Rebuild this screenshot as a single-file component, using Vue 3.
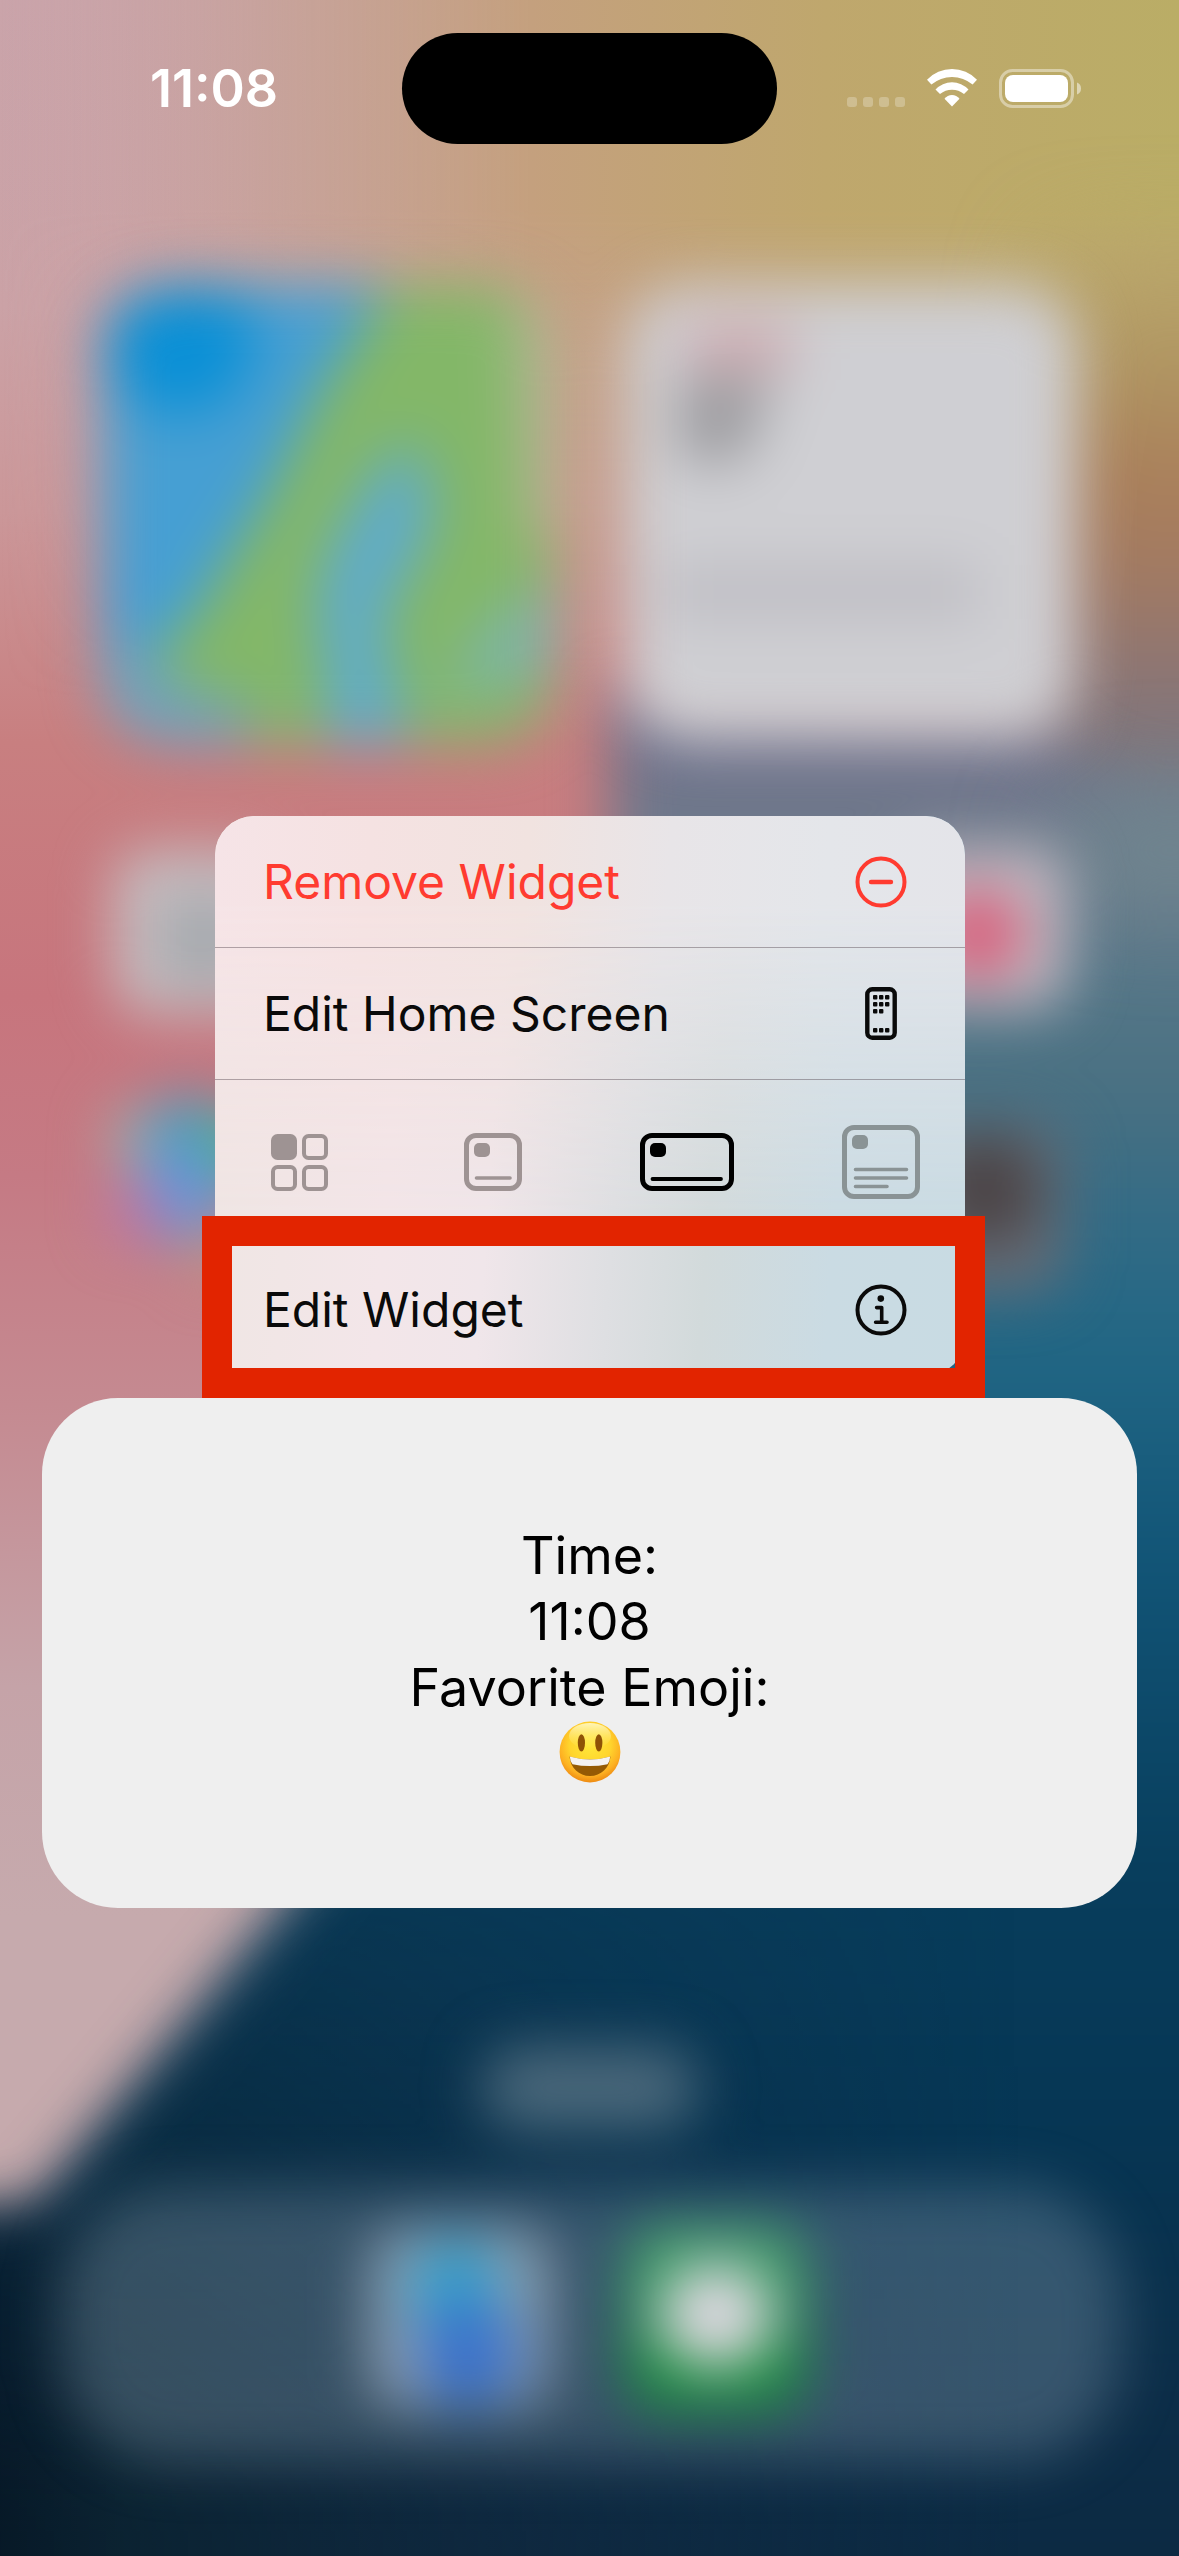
<script setup>
const sizes = [
  { id: 'icon', label: 'App icon', w: 57, h: 57 },
  { id: 'small', label: 'Small widget', w: 58, h: 58 },
  { id: 'medium', label: 'Medium widget', w: 94, h: 58 },
  { id: 'large', label: 'Large widget', w: 78, h: 74 },
]
const current = 'medium'
const phoneDots = [
  [8, 8], [14, 8], [20, 8],
  [8, 15], [14, 15], [20, 15],
  [8, 22], [14, 22],
  [8, 41], [14, 41], [20, 41],
]
</script>

<template>
  <main class="screen">
    <svg class="wallpaper" viewBox="0 0 1179 2556" preserveAspectRatio="none" aria-hidden="true">
      <defs>
        <filter id="soft" filterUnits="userSpaceOnUse" x="-300" y="-300" width="1779" height="3156" color-interpolation-filters="sRGB">
          <feGaussianBlur stdDeviation="28" />
        </filter>
        <filter id="softer" filterUnits="userSpaceOnUse" x="-300" y="-300" width="1779" height="3156" color-interpolation-filters="sRGB">
          <feGaussianBlur stdDeviation="48" />
        </filter>
        <linearGradient id="pink" gradientUnits="userSpaceOnUse" x1="0" y1="0" x2="0" y2="2556">
          <stop offset="0" stop-color="#caa4aa" />
          <stop offset="0.12" stop-color="#cba2a6" />
          <stop offset="0.2" stop-color="#cb9799" />
          <stop offset="0.29" stop-color="#c87f80" />
          <stop offset="0.39" stop-color="#c7757d" />
          <stop offset="0.46" stop-color="#c57a84" />
          <stop offset="0.55" stop-color="#c58a91" />
          <stop offset="0.66" stop-color="#c5a3a8" />
          <stop offset="0.75" stop-color="#c6aaad" />
          <stop offset="1" stop-color="#c6aaad" />
        </linearGradient>
        <linearGradient id="gold">
          <stop offset="0" stop-color="#caa4aa" stop-opacity="0" />
          <stop offset="0.25" stop-color="#c6a295" stop-opacity="0.8" />
          <stop offset="0.45" stop-color="#c4a07e" />
          <stop offset="0.7" stop-color="#bfa76d" />
          <stop offset="1" stop-color="#baad66" />
        </linearGradient>
        <linearGradient id="fade" x1="0" y1="0" x2="0" y2="1">
          <stop offset="0" stop-color="#fff" />
          <stop offset="0.3" stop-color="#fff" />
          <stop offset="1" stop-color="#000" />
        </linearGradient>
        <mask id="goldMask" maskUnits="userSpaceOnUse" x="0" y="0" width="1179" height="700">
          <rect width="1179" height="700" fill="url(#fade)" />
        </mask>
        <linearGradient id="edge" gradientUnits="userSpaceOnUse" x1="0" y1="240" x2="0" y2="900">
          <stop offset="0" stop-color="#bca869" />
          <stop offset="0.18" stop-color="#b09864" />
          <stop offset="0.36" stop-color="#aa7e59" />
          <stop offset="0.52" stop-color="#a27a63" />
          <stop offset="0.66" stop-color="#8a7475" />
          <stop offset="0.85" stop-color="#7a7882" />
          <stop offset="1" stop-color="#70848e" />
        </linearGradient>
        <linearGradient id="sea" gradientUnits="userSpaceOnUse" x1="0" y1="740" x2="0" y2="2556">
          <stop offset="0" stop-color="#70718a" />
          <stop offset="0.05" stop-color="#6f7a8c" />
          <stop offset="0.13" stop-color="#567788" />
          <stop offset="0.2" stop-color="#487082" />
          <stop offset="0.27" stop-color="#316b86" />
          <stop offset="0.34" stop-color="#216684" />
          <stop offset="0.45" stop-color="#125577" />
          <stop offset="0.62" stop-color="#083e5d" />
          <stop offset="0.76" stop-color="#063654" />
          <stop offset="0.9" stop-color="#0c2e49" />
          <stop offset="1" stop-color="#0c2a43" />
        </linearGradient>
        <linearGradient id="night">
          <stop offset="0" stop-color="#04101e" />
          <stop offset="0.16" stop-color="#0b2230" stop-opacity="0.9" />
          <stop offset="0.45" stop-color="#11273c" stop-opacity="0.5" />
          <stop offset="0.8" stop-color="#0f2c42" stop-opacity="0" />
        </linearGradient>
        <linearGradient id="nightFade" gradientUnits="userSpaceOnUse" x1="0" y1="1900" x2="0" y2="2500">
          <stop offset="0" stop-color="#555" />
          <stop offset="0.55" stop-color="#aaa" />
          <stop offset="1" stop-color="#fff" />
        </linearGradient>
        <mask id="nightMask" maskUnits="userSpaceOnUse" x="-100" y="1800" width="1400" height="900">
          <path d="M-200 2240 L60 2210 C160 2070 240 1990 340 1870 H1300 V2800 H-200 Z" fill="url(#nightFade)" filter="url(#soft)" />
        </mask>
        <linearGradient id="messages" x1="0" y1="0" x2="0" y2="1">
          <stop offset="0" stop-color="#4aa571" />
          <stop offset="1" stop-color="#128a34" />
        </linearGradient>
        <clipPath id="mapClip"><rect x="103" y="286" width="450" height="456" rx="66" /></clipPath>
      </defs>

      <rect width="1179" height="2556" fill="url(#pink)" />
      <rect width="1179" height="700" fill="url(#gold)" mask="url(#goldMask)" />
      <path d="M1060 250 H1400 V1000 H1000 V620 Z" fill="url(#edge)" filter="url(#softer)" />
      <path d="M610 690 L1020 710 C1090 780 1120 810 1400 790 V2800 H-200 V2212 H30 C160 2060 220 1985 320 1860 C470 1690 640 1400 610 1000 Z" fill="url(#sea)" filter="url(#soft)" />
      <ellipse cx="1170" cy="850" rx="120" ry="60" fill="#70868f" filter="url(#softer)" />
      <rect x="-100" y="1800" width="1400" height="900" fill="url(#night)" mask="url(#nightMask)" />

      <g filter="url(#soft)">
        <g clip-path="url(#mapClip)">
          <rect x="100" y="280" width="460" height="470" fill="#469fd3" />
          <circle cx="180" cy="340" r="74" fill="#0a90d6" />
          <path d="M400 270 H560 V760 H120 V680 L190 620 L265 500 L320 390 Z" fill="#83b768" />
          <path d="M510 270 H560 V540 H525 Z" fill="#b0b795" />
          <path d="M405 440 C450 490 435 540 390 600 C375 640 400 670 410 760 H315 C350 690 300 640 325 560 C345 520 365 480 405 440 Z" fill="#5fabcb" />
          <path d="M480 630 L560 570 V670 L440 700 Z" fill="#7cb5a6" />
          <path d="M90 640 L150 650 L180 690 L250 705 V760 H90 Z" fill="#6ba2c0" />
        </g>
        <rect x="626" y="286" width="450" height="454" rx="62" fill="#cfcfd3" />
        <rect x="686" y="330" width="106" height="34" fill="#cf9fa5" />
        <path d="M678 376 H776 L742 462 H680 Z" fill="#9b9a9e" />
        <rect x="664" y="564" width="316" height="56" fill="#bfbec4" />
        <rect x="114" y="850" width="166" height="164" rx="34" fill="#c6bfc2" />
        <rect x="160" y="896" width="90" height="90" fill="#a5a9ae" />
        <rect x="900" y="846" width="168" height="162" rx="34" fill="#c2bac2" />
        <circle cx="978" cy="934" r="46" fill="#d85f7b" />
        <circle cx="142" cy="1140" r="34" fill="#a6adaa" />
        <circle cx="190" cy="1142" r="46" fill="#4a9cbf" />
        <circle cx="236" cy="1150" r="34" fill="#48b78e" />
        <circle cx="184" cy="1196" r="46" fill="#6494dc" />
        <circle cx="136" cy="1210" r="30" fill="#b878ac" />
        <circle cx="216" cy="1250" r="26" fill="#bd9880" />
        <rect x="894" y="1122" width="170" height="170" rx="36" fill="#686d77" />
        <circle cx="985" cy="1190" r="56" fill="#4b4446" />
        <rect x="482" y="2046" width="216" height="84" rx="38" fill="#4a687b" />
        <rect x="60" y="2186" width="1060" height="276" rx="110" fill="#8ba1b4" fill-opacity="0.34" />
        <rect x="370" y="2228" width="180" height="180" rx="36" fill="#8fa0b2" />
        <circle cx="456" cy="2290" r="48" fill="#309fcb" />
        <circle cx="468" cy="2354" r="52" fill="#3a72cc" />
        <rect x="626" y="2226" width="180" height="184" rx="36" fill="url(#messages)" />
        <ellipse cx="716" cy="2316" rx="57" ry="51" fill="#dfd9e2" />
      </g>
    </svg>

    <header class="status">
      <time class="clock">11:08</time>
      <div class="island"></div>
      <div class="indicators">
        <svg width="58" height="40" viewBox="0 0 58 40" role="img" aria-label="No signal">
          <g fill="#fff" fill-opacity="0.25">
            <rect x="0" y="28" width="10" height="10" rx="3" />
            <rect x="16" y="28" width="10" height="10" rx="3" />
            <rect x="32" y="28" width="10" height="10" rx="3" />
            <rect x="48" y="28" width="10" height="10" rx="3" />
          </g>
        </svg>
        <svg width="50" height="40" viewBox="0 0 50 40" role="img" aria-label="Wi-Fi">
          <g fill="#fff">
            <path d="M0 10.7 A34.6 34.6 0 0 1 50 10.7 L45.6 15.5 A32 32 0 0 0 4.4 15.5 Z" />
            <path d="M8.5 20.5 A22.5 22.5 0 0 1 41.5 20.5 L37 25 A18.9 18.9 0 0 0 13 25 Z" />
            <path d="M17.5 29.7 A9.5 9.5 0 0 1 32.5 29.7 L25 37.4 Z" />
          </g>
        </svg>
        <svg width="82" height="40" viewBox="0 0 82 40" role="img" aria-label="Battery full">
          <rect x="1.5" y="1.5" width="72" height="36" rx="12" fill="none" stroke="#fff" stroke-opacity="0.42" stroke-width="3" />
          <rect x="6" y="6" width="63" height="27" rx="8" fill="#fff" />
          <path d="M78 13.5 Q82 15 82 19.5 Q82 24 78 25.5 Z" fill="#fff" fill-opacity="0.5" />
        </svg>
      </div>
    </header>

    <nav class="menu" aria-label="Widget actions">
      <button class="row danger" type="button">
        <span>Remove Widget</span>
        <svg width="52" height="52" viewBox="0 0 52 52" fill="none" stroke="currentColor" stroke-width="4" stroke-linecap="round" aria-hidden="true">
          <circle cx="26" cy="26" r="23.5" />
          <path d="M16 26 H36" stroke-width="4.4" />
        </svg>
      </button>
      <button class="row" type="button">
        <span>Edit Home Screen</span>
        <svg width="52" height="54" viewBox="0 0 52 54" aria-hidden="true">
          <g transform="translate(10 0)">
            <rect x="2.3" y="2.3" width="27.4" height="48.4" rx="5" fill="none" stroke="currentColor" stroke-width="4.4" />
            <rect v-for="([x, y], i) in phoneDots" :key="i" :x="x" :y="y" width="4.4" height="4.4" rx="1" fill="currentColor" />
          </g>
        </svg>
      </button>
      <div class="sizes" role="group" aria-label="Widget size">
        <button
          v-for="s in sizes"
          :key="s.id"
          class="size"
          :class="[s.id, { active: s.id === current }]"
          type="button"
          :aria-label="s.label"
          :aria-pressed="s.id === current"
        >
          <svg :width="s.w" :height="s.h" :viewBox="`0 0 ${s.w} ${s.h}`" fill="none" stroke="currentColor" stroke-linecap="round" aria-hidden="true">
            <g v-if="s.id === 'icon'" stroke-width="4">
              <rect x="2" y="2" width="22" height="22" rx="4.5" fill="currentColor" />
              <rect x="33" y="2" width="22" height="22" rx="4.5" />
              <rect x="2" y="33" width="22" height="22" rx="4.5" />
              <rect x="33" y="33" width="22" height="22" rx="4.5" />
            </g>
            <template v-else>
              <rect x="2.5" y="2.5" :width="s.w - 5" :height="s.h - 5" rx="9.5" stroke-width="5" />
              <rect x="10" y="10" width="16" height="14" rx="5" fill="currentColor" stroke="none" />
              <path v-if="s.id === 'small'" d="M12.5 45 H46" stroke-width="3.6" />
              <path v-if="s.id === 'medium'" d="M12.5 46 H81" stroke-width="3.8" />
              <path v-if="s.id === 'large'" d="M13.5 44.5 H64.5 M13.5 53 H64.5 M13.5 61.5 H45" stroke-width="3.6" />
            </template>
          </svg>
        </button>
      </div>
      <button class="row highlighted" type="button">
        <span>Edit Widget</span>
        <svg width="52" height="52" viewBox="0 0 52 52" fill="none" stroke="currentColor" stroke-width="4" stroke-linecap="round" stroke-linejoin="round" aria-hidden="true">
          <circle cx="26" cy="26" r="23.5" />
          <path d="M21.6 23.6 H26.7 V38.2 M20.6 38.2 H32" stroke-width="3.6" />
          <circle cx="25.8" cy="14.6" r="3.3" fill="currentColor" stroke="none" />
        </svg>
      </button>
    </nav>

    <section class="widget">
      <p>Time:</p>
      <p>11:08</p>
      <p>Favorite Emoji:</p>
      <svg class="emoji" width="62" height="62" viewBox="0 0 62 62" role="img" aria-label="Smiling face with open mouth">
        <defs>
          <radialGradient id="face" cx="0.5" cy="0.38" r="0.62">
            <stop offset="0" stop-color="#ffe83a" />
            <stop offset="0.55" stop-color="#ffd42d" />
            <stop offset="0.82" stop-color="#fdb022" />
            <stop offset="1" stop-color="#ee8a12" />
          </radialGradient>
          <linearGradient id="shine" x1="0" y1="0" x2="0" y2="1">
            <stop offset="0" stop-color="#fffbd0" stop-opacity="0.85" />
            <stop offset="1" stop-color="#fff27a" stop-opacity="0" />
          </linearGradient>
        </defs>
        <circle cx="31" cy="31" r="30.4" fill="url(#face)" />
        <ellipse cx="31" cy="15" rx="21" ry="13" fill="url(#shine)" />
        <ellipse cx="22.4" cy="21.8" rx="3.6" ry="8.6" fill="#8f5206" />
        <ellipse cx="39.8" cy="21.8" rx="3.6" ry="8.6" fill="#8f5206" />
        <path d="M10.5 35.5 Q31 41.5 51.5 35.5 C50.5 47 42 55 31 55 C20 55 11.5 47 10.5 35.5 Z" fill="#955a04" />
        <path d="M10.8 35.5 Q31 41.5 51.2 35.5 Q51 40.5 48.5 43.2 Q31 47 13.5 43.2 Q11 40.5 10.8 35.5 Z" fill="#f4f2f2" />
      </svg>
    </section>
  </main>
</template>

<style>
body {
  margin: 0;
}
</style>

<style scoped>
.screen {
  position: relative;
  isolation: isolate;
  box-sizing: border-box;
  min-height: 100vh;
  overflow: hidden;
  display: flex;
  flex-direction: column;
  font-family: Inter, "Liberation Sans", sans-serif;
  color: #0a0a0a;
}
.wallpaper {
  position: absolute;
  inset: 0;
  z-index: -1;
  width: 100%;
  height: 100%;
}
.status {
  display: grid;
  grid-template-columns: 1fr 375px 1fr;
  align-items: center;
  height: 177px;
  color: #fff;
}
.clock {
  padding-left: 26px;
  text-align: center;
  font-size: 52px;
  line-height: 64px;
  font-weight: 600;
}
.island {
  height: 111px;
  border-radius: 56px;
  background: #000;
}
.indicators {
  display: flex;
  justify-content: flex-end;
  gap: 22px;
  padding-right: 98px;
}
.menu {
  position: relative;
  z-index: 1;
  margin: 639px 214px 0 215px;
  border-radius: 39px;
  background: linear-gradient(94deg, #efe6e3 0%, #f3e6e9 25%, #f0e6ea 38%, #dedfe2 54%, #d2dadb 66%, #cadbe3 82%, #c8dbe3 100%);
}
.menu::before {
  content: "";
  position: absolute;
  inset: 0;
  z-index: -1;
  border-radius: inherit;
  background: linear-gradient(94deg, #f6e4e7 0%, #f5e2e2 20%, #f1e3e0 40%, #e8e5e8 58%, #e4e6ea 78%, #e4e4e9 100%);
  -webkit-mask-image: linear-gradient(#000 15%, transparent 75%);
  mask-image: linear-gradient(#000 15%, transparent 75%);
}
button {
  margin: 0;
  border: 0;
  background: none;
  font: inherit;
  color: inherit;
}
.row {
  position: relative;
  box-sizing: border-box;
  display: flex;
  align-items: center;
  justify-content: space-between;
  width: 100%;
  height: 132px;
  padding: 0 58px 0 48px;
  border-bottom: 1px solid rgba(70, 55, 65, 0.4);
  font-size: 48px;
  line-height: 66px;
  text-align: left;
}
.danger {
  color: #ff3b30;
}
.sizes {
  display: flex;
  align-items: center;
  justify-content: space-between;
  height: 164px;
  padding: 0 37px;
}
.size {
  display: flex;
  align-items: center;
  justify-content: center;
  width: 94px;
  height: 94px;
  padding: 0;
  color: #9e9393;
}
.size.large {
  color: #8a9395;
}
.size.active {
  color: #000;
}
.highlighted {
  border-bottom: 0;
}
.highlighted::after {
  content: "";
  position: absolute;
  inset: -28px -20px -22px -13px;
  border: 30px solid #e22400;
}
.widget {
  display: flex;
  flex-direction: column;
  align-items: center;
  justify-content: center;
  min-height: 510px;
  margin: 22px 42px 0;
  border-radius: 76px;
  background: #efefef;
  color: #000;
  font-size: 52px;
  line-height: 66px;
}
.widget p {
  margin: 0;
}
</style>
